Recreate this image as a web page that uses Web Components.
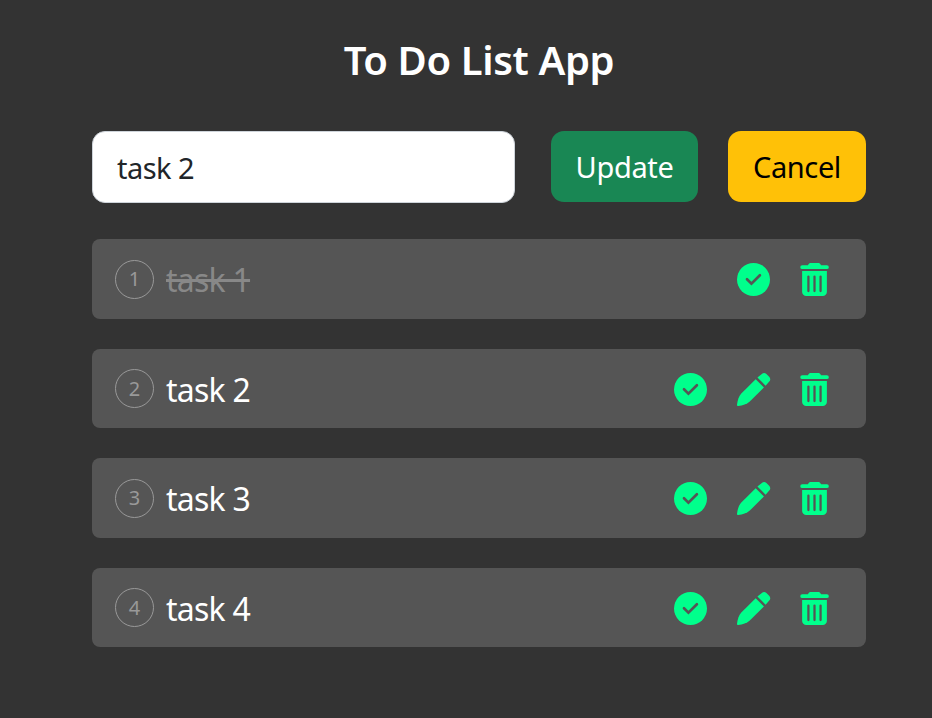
<!DOCTYPE html>
<html lang="en">
<head>
<meta charset="utf-8">
<title>To Do List App</title>
<style>
html,body{margin:0;background:#333;height:718px;overflow:hidden}
body{font-family:"Noto Sans","Open Sans",sans-serif;color:#fff}
</style>
</head>
<body>
<todo-app>
  <span slot="title">To Do List App</span>
  <task-field slot="form" value="task 2"></task-field>
  <app-button slot="form" style="--bg:#198754;--fg:#fff;--w:147px;--ls:-.35px">Update</app-button>
  <app-button slot="form" style="--bg:#ffc107;--fg:#000;--w:138px;--ls:-.4px">Cancel</app-button>
  <todo-item number="1" done>task 1</todo-item>
  <todo-item number="2">task 2</todo-item>
  <todo-item number="3">task 3</todo-item>
  <todo-item number="4">task 4</todo-item>
</todo-app>
<script>
class Base extends HTMLElement{
  connectedCallback(){
    if(!this.shadowRoot) this.attachShadow({mode:'open'}).innerHTML=this.view();
  }
}
customElements.define('app-icon',class extends Base{
  view(){
    const shapes={
      check:'<circle cx="8" cy="8" r="8"/><path d="M4.85 7.9 7 10l4.1-4.05" fill="none" stroke="#555" stroke-width="1.3" stroke-linecap="round" stroke-linejoin="miter"/>',
      pencil:'<path d="M12.05.45a1.7 1.7 0 0 1 2.2 0L15.6 1.8a1.8 1.8 0 0 1 .05 2.35L13.85 6.15 9.9 2.15z"/><path d="M9.05 3.05 13.05 7 6.2 13.85C4.8 15.1 2.8 15.75.55 16a.5.5 0 0 1-.55-.5C.2 13.3.9 11.2 2.1 9.9z"/>',
      trash:'<path d="M2.05 1.05H4.8C5.2.3 5.6 0 6.3 0h3.4c.7 0 1.1.3 1.5 1.05H14a.95.95 0 0 1 0 1.9H2.05a.95.95 0 0 1 0-1.9z"/><path fill-rule="evenodd" d="M2 3.85h12V14a2 2 0 0 1-2 2H4a2 2 0 0 1-2-2zM4.5 6.6v7a.55.55 0 0 0 1.1 0v-7a.55.55 0 0 0-1.1 0zm2.95 0v7a.55.55 0 0 0 1.1 0v-7a.55.55 0 0 0-1.1 0zm2.95 0v7a.55.55 0 0 0 1.1 0v-7a.55.55 0 0 0-1.1 0z"/>'
    };
    return `<style>:host{display:block;width:33px;height:33px;color:#00ff8c}svg{display:block;width:100%;height:100%;overflow:visible}</style>
      <svg viewBox="0 0 16 16" fill="currentColor">${shapes[this.getAttribute('name')]}</svg>`;
  }
});
customElements.define('app-button',class extends Base{
  view(){return `<style>:host{display:block;width:var(--w);height:71px}
    button{all:unset;box-sizing:border-box;display:flex;align-items:center;justify-content:center;width:100%;height:100%;border-radius:13px;background:var(--bg);color:var(--fg);font-size:29px;line-height:40px;letter-spacing:var(--ls);padding-bottom:0}</style>
    <button><slot></slot></button>`}
});
customElements.define('task-field',class extends Base{
  view(){return `<style>:host{display:block;width:423px;height:72px;margin-right:6px}
    input{display:block;box-sizing:border-box;width:100%;height:100%;margin:0;border:1px solid #ced4da;border-radius:13px;background:#fff;color:#212529;font:29px "Noto Sans",sans-serif;letter-spacing:-.55px;padding:0 24px;outline:none}</style>
    <input type="text" value="${this.getAttribute('value')}">`}
});
customElements.define('todo-item',class extends Base{
  view(){
    const done=this.hasAttribute('done');
    return `<style>:host{display:flex;align-items:center;box-sizing:border-box;height:79.6px;padding:0 35px 0 23px;border-radius:8px;background:#555}
    .n{box-sizing:border-box;width:39px;height:39px;margin-top:.8px;border:1px solid #999;border-radius:50%;display:flex;align-items:center;justify-content:center;font-size:20px;line-height:20px;color:#999}
    .t{flex:1;margin-left:12px;font-size:32px;line-height:40px;padding-top:3px;color:#fff;letter-spacing:-.75px}
    :host([done]) .t{color:#888;text-decoration:line-through;text-decoration-thickness:3px}
    .i{display:flex;gap:30px;padding-top:1.5px}
    app-icon:last-child{margin-left:-2px}</style>
    <span class="n">${this.getAttribute('number')}</span><span class="t"><slot></slot></span>
    <div class="i"><app-icon name="check"></app-icon>${done?'':'<app-icon name="pencil"></app-icon>'}<app-icon name="trash"></app-icon></div>`;
  }
});
customElements.define('todo-app',class extends Base{
  view(){return `<style>:host{display:block;box-sizing:border-box;padding:35px 66px 0 92px}
    h1{margin:0;height:50px;line-height:50px;text-align:center;font-size:40px;font-weight:600;letter-spacing:-.38px;white-space:nowrap}
    .form{display:flex;gap:30px;margin-top:46px;height:72px}
    .list{display:flex;flex-direction:column;gap:30px;margin-top:36px}</style>
    <h1><slot name="title"></slot></h1><div class="form"><slot name="form"></slot></div><div class="list"><slot></slot></div>`}
});
</script>
</body>
</html>
